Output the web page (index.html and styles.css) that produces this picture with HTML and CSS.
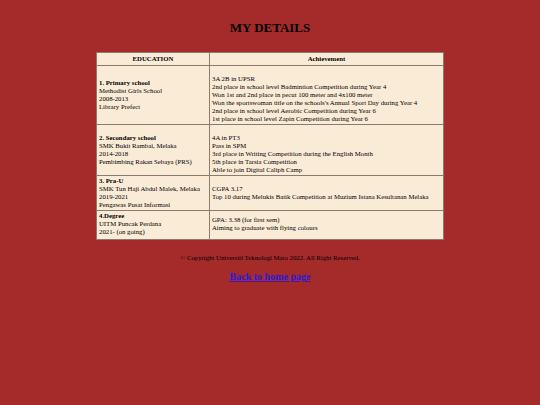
FILE: index.html
```html
<!DOCTYPE html>
<html>
<head>
<meta charset="utf-8">
<title>My Details</title>
<link rel="stylesheet" href="styles.css">
</head>
<body>
<h1 class="title">MY DETAILS</h1>
<table class="details">
  <colgroup><col class="col-edu"><col class="col-ach"></colgroup>
  <tr>
    <th>EDUCATION</th>
    <th>Achievement</th>
  </tr>
  <tr>
    <td><b>1. Primary school</b><br>Methodist Girls School<br>2008-2013<br>Library Prefect</td>
    <td><br>3A 2B in UPSR<br>2nd place in school level Badmintion Competition during Year 4<br>Won 1st and 2nd place in pecut 100 meter and 4x100 meter<br>Won the sportswoman title on the schools's Annual Sport Day during Year 4<br>2nd place in school level Aerobic Competition during Year 6<br>1st place in school level Zapin Competition during Year 6</td>
  </tr>
  <tr>
    <td><br><b>2. Secondary school</b><br>SMK Bukit Rambai, Melaka<br>2014-2018<br>Pembimbing Rakan Sebaya (PRS)<br><br></td>
    <td><br>4A in PT3<br>Pass in SPM<br>3rd place in Writing Competition during the English Month<br>5th place in Tarsia Competition<br>Able to join Digital Caliph Camp</td>
  </tr>
  <tr>
    <td><b>3. Pra-U</b><br>SMK Tun Haji Abdul Malek, Melaka<br>2019-2021<br>Pengawas Pusat Informasi</td>
    <td>CGPA 3.17<br>Top 10 during Melukis Batik Competition at Muzium Istana Kesultanan Melaka</td>
  </tr>
  <tr class="last">
    <td><b>4.Degree</b><br>UITM Puncak Perdana<br>2021- (on going)</td>
    <td>GPA: 3.38 (for first sem)<br>Aiming to graduate with flying colours</td>
  </tr>
</table>
<p class="footer">© Copyright Universiti Teknologi Mara 2022. All Right Reserved.</p>
<p class="back"><a href="#">Back to home page</a></p>
</body>
</html>
```

FILE: styles.css
```css
body {
  margin: 0;
  background: #a52a2a;
  font-family: "Liberation Serif", "Times New Roman", serif;
  color: #000;
}

.title {
  font-size: 13px;
  line-height: 14px;
  font-weight: bold;
  text-align: center;
  margin: 21px 0 17px;
}

.details {
  margin: 0 auto;
  width: 348px;
  border-collapse: collapse;
  background: #faebd7;
  font-size: 6.75px;
  line-height: 8px;
  border: 1px solid #3a1212;
}

.col-edu {
  width: 113px;
}

.details th {
  font-weight: bold;
  text-align: center;
  padding: 2px 2px 2px;
  border: 1px solid #8a7a70;
}

.details td {
  text-align: left;
  vertical-align: middle;
  padding: 1px 2px;
  border: 1px solid #8a7a70;
}

.details .last td {
  padding-bottom: 3px;
}

.footer {
  font-size: 6.75px;
  line-height: 8px;
  text-align: center;
  margin: 14px 0 0;
}

.back {
  font-size: 10px;
  line-height: 12px;
  font-weight: bold;
  text-align: center;
  margin: 9px 0 0;
}

.back a {
  color: #2a1bd6;
}
```
